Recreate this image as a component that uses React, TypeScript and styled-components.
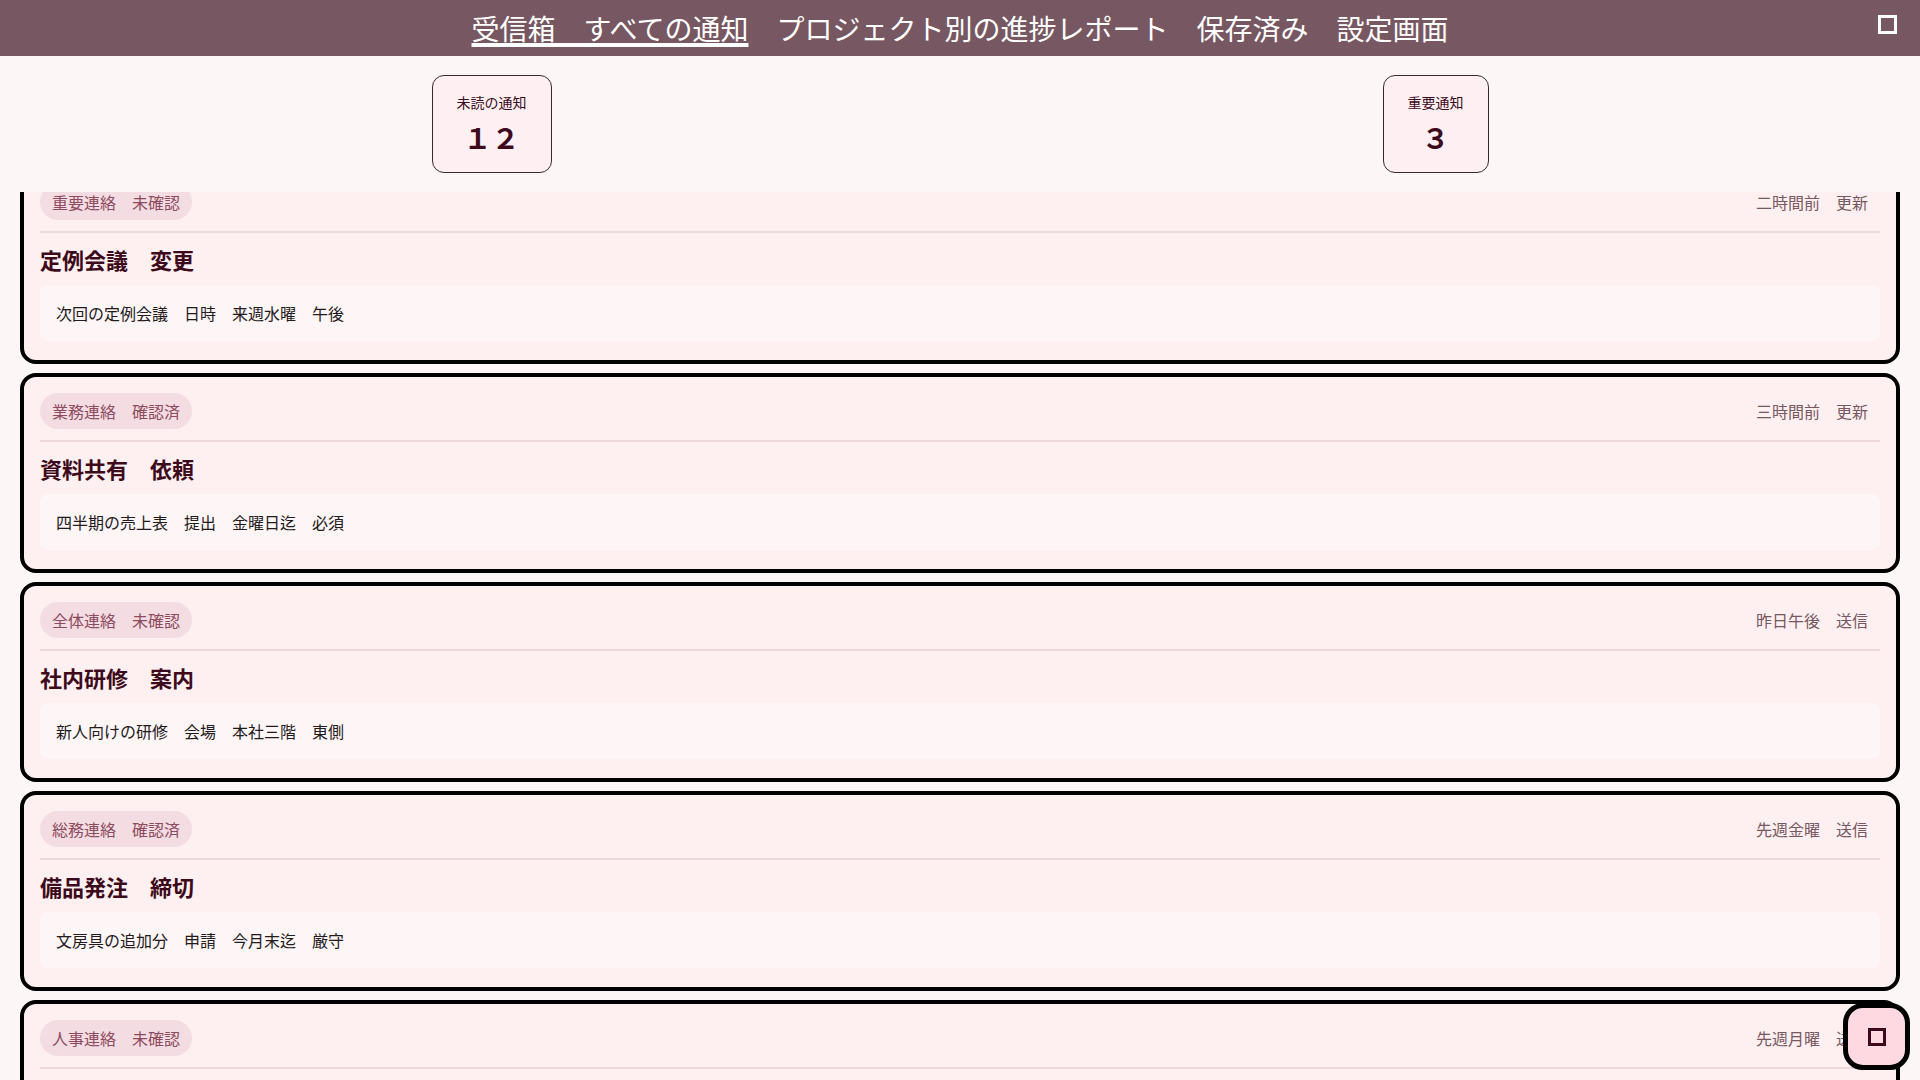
import React, { useLayoutEffect, useRef } from "react";
import styled, { createGlobalStyle } from "styled-components";

const GlobalStyle = createGlobalStyle`
  *, *::before, *::after { box-sizing: border-box; }
  html, body { margin: 0; padding: 0; height: 100%; }
  body {
    background: #fdf6f6;
    font-family: "Noto Sans CJK JP", "Noto Sans", sans-serif;
    overflow: hidden;
  }
  #root { height: 100%; }
`;

const Shell = styled.div`
  height: 100vh;
  display: flex;
  flex-direction: column;
  background: #fdf6f6;
`;

const TopBar = styled.header`
  flex: none;
  height: 56px;
  background: #775761;
  display: grid;
  grid-template-columns: 1fr auto 1fr;
  align-items: center;
  padding: 0 23px;
`;

const Nav = styled.nav`
  grid-column: 2;
  display: flex;
  gap: 28px;
`;

const NavLink = styled.a<{ $active?: boolean }>`
  font-size: 28px;
  line-height: 28px;
  color: #ffffff;
  white-space: nowrap;
  cursor: pointer;
  text-decoration: ${(p) => (p.$active ? "underline" : "none")};
  text-decoration-thickness: 4px;
  text-underline-offset: 3px;
`;

const IconButton = styled.button`
  grid-column: 3;
  justify-self: end;
  display: flex;
  align-items: center;
  justify-content: center;
  background: none;
  border: 0;
  padding: 0;
  margin-bottom: 7px;
  cursor: pointer;
`;

const Scroller = styled.main`
  flex: 1;
  min-height: 0;
  overflow-y: auto;
  scrollbar-width: none;
  &::-webkit-scrollbar { display: none; }
`;

const StatsBar = styled.section`
  position: sticky;
  top: 0;
  z-index: 2;
  height: 136px;
  background: #fdf6f6;
  display: flex;
  justify-content: space-around;
  align-items: flex-start;
  padding: 19px 16px;
`;

const StatCard = styled.div`
  border: 1px solid #3a2a2e;
  border-radius: 12px;
  background: #fef0f2;
  padding: 18px 24px;
  display: flex;
  flex-direction: column;
  align-items: center;
  gap: 10px;
`;

const StatLabel = styled.span`
  font-size: 14px;
  line-height: 16px;
  color: #3d0a1c;
  white-space: nowrap;
`;

const StatValue = styled.span`
  font-size: 28px;
  line-height: 34px;
  font-weight: 700;
  color: #3d0a1c;
  white-space: nowrap;
`;

const List = styled.div`
  display: flex;
  flex-direction: column;
  gap: 9px;
  padding: 16px 20px 20px;
`;

const Card = styled.article`
  border: 4px solid #000000;
  border-radius: 16px;
  background: #fef0f0;
  padding: 16px 16px 19px;
  display: flex;
  flex-direction: column;
  gap: 12px;
`;

const CardHeader = styled.div`
  display: flex;
  justify-content: space-between;
  align-items: center;
  padding-bottom: 11px;
  border-bottom: 2px solid #ecd8dc;
`;

const Badge = styled.span`
  background: #f3dde2;
  border-radius: 18px;
  padding: 10px 12px;
  font-size: 16px;
  line-height: 16px;
  color: #8e4a5e;
  white-space: nowrap;
`;

const Meta = styled.span`
  padding: 10px 12px;
  font-size: 16px;
  line-height: 16px;
  color: #775761;
  white-space: nowrap;
`;

const Title = styled.h2`
  margin: 0;
  font-size: 22px;
  line-height: 28px;
  font-weight: 700;
  color: #3d0a1c;
  white-space: nowrap;
`;

const Body = styled.p`
  margin: 0;
  background: #fdf5f6;
  border-radius: 8px;
  padding: 16px;
  font-size: 16px;
  line-height: 24px;
  color: #231a1c;
  white-space: nowrap;
`;

const Fab = styled.button`
  position: fixed;
  right: 10px;
  bottom: 10px;
  width: 67px;
  height: 67px;
  border: 5px solid #000000;
  border-radius: 20px;
  background: #ffd9e1;
  display: flex;
  align-items: center;
  justify-content: center;
  padding: 0;
  cursor: pointer;
  z-index: 5;
`;

type Item = { badge: string; meta: string; title: string; body: string };

const items: Item[] = [
  { badge: "重要連絡　未確認", meta: "二時間前　更新", title: "定例会議　変更", body: "次回の定例会議　日時　来週水曜　午後" },
  { badge: "業務連絡　確認済", meta: "三時間前　更新", title: "資料共有　依頼", body: "四半期の売上表　提出　金曜日迄　必須" },
  { badge: "全体連絡　未確認", meta: "昨日午後　送信", title: "社内研修　案内", body: "新人向けの研修　会場　本社三階　東側" },
  { badge: "総務連絡　確認済", meta: "先週金曜　送信", title: "備品発注　締切", body: "文房具の追加分　申請　今月末迄　厳守" },
  { badge: "人事連絡　未確認", meta: "先週月曜　送信", title: "休暇申請　手順", body: "年次休暇の申請　方法　専用様式　利用" },
  { badge: "経理連絡　確認済", meta: "先月下旬　送信", title: "経費精算　期限", body: "出張旅費の精算　書類　翌月五日　提出" },
];

export default function App() {
  const scrollerRef = useRef<HTMLElement>(null);

  useLayoutEffect(() => {
    if (scrollerRef.current) scrollerRef.current.scrollTop = 44;
  }, []);

  return (
    <>
      <GlobalStyle />
      <Shell>
        <TopBar>
          <Nav>
            <NavLink $active>受信箱　すべての通知</NavLink>
            <NavLink>プロジェクト別の進捗レポート</NavLink>
            <NavLink>保存済み</NavLink>
            <NavLink>設定画面</NavLink>
          </Nav>
          <IconButton aria-label="メニュー">
            <svg width="19" height="19" viewBox="0 0 19 19">
              <rect x="1.5" y="1.5" width="16" height="16" fill="none" stroke="#ffffff" strokeWidth="3" />
            </svg>
          </IconButton>
        </TopBar>
        <Scroller ref={scrollerRef}>
          <StatsBar>
            <StatCard>
              <StatLabel>未読の通知</StatLabel>
              <StatValue>１２</StatValue>
            </StatCard>
            <StatCard>
              <StatLabel>重要通知</StatLabel>
              <StatValue>３</StatValue>
            </StatCard>
          </StatsBar>
          <List>
            {items.map((it, i) => (
              <Card key={i}>
                <CardHeader>
                  <Badge>{it.badge}</Badge>
                  <Meta>{it.meta}</Meta>
                </CardHeader>
                <Title>{it.title}</Title>
                <Body>{it.body}</Body>
              </Card>
            ))}
          </List>
        </Scroller>
        <Fab aria-label="新規作成">
          <svg width="18" height="18" viewBox="0 0 18 18">
            <rect x="1.5" y="1.5" width="15" height="15" fill="none" stroke="#3d0a1c" strokeWidth="3" />
          </svg>
        </Fab>
      </Shell>
    </>
  );
}
